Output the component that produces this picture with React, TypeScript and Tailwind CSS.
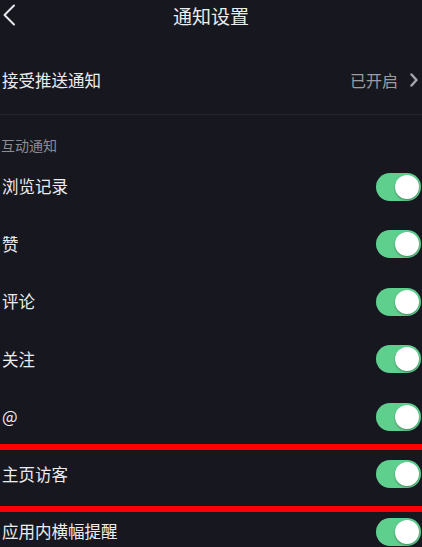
import { useState } from 'react'

type Item = {
    label: string
}

const items: Item[] = [
    { label: '浏览记录' },
    { label: '赞' },
    { label: '评论' },
    { label: '关注' },
    { label: '@' },
    { label: '主页访客' },
    { label: '应用内横幅提醒' },
]

function Toggle({ on, onClick }: { on: boolean; onClick: () => void }) {
    return (
        <button
            onClick={onClick}
            className={`relative h-[28px] w-[45px] rounded-full ${on ? 'bg-[#5fcf8e]' : 'bg-[#3a3a44]'}`}
        >
            <span
                className={`absolute top-[2px] h-[24px] w-[24px] rounded-full bg-white shadow-[0_1px_2px_rgba(0,0,0,0.35)] ${on ? 'left-[19px]' : 'left-[2px]'}`}
            />
        </button>
    )
}

export default function App() {
    const [states, setStates] = useState<boolean[]>(items.map(() => true))

    const flip = (i: number) => {
        setStates(prev => prev.map((v, j) => (j === i ? !v : v)))
    }

    return (
        <div className="h-[547px] w-[422px] overflow-hidden bg-[#171720] text-[#ececee] font-['Noto_Sans_CJK_SC',sans-serif]">
            {/* header */}
            <div className="relative flex h-[30px] items-center justify-center">
                <svg className="absolute left-[2px] top-[4px]" width="14" height="22" viewBox="0 0 14 22">
                    <polyline points="12,1.5 2.5,11 12,20.5" fill="none" stroke="#e8e8ea" strokeWidth="2" strokeLinecap="round" strokeLinejoin="round" />
                </svg>
                <span className="text-[19px] leading-none">通知设置</span>
            </div>

            {/* push */}
            <div className="mt-[16px] flex h-[68px] items-center justify-between pl-[2px] pr-[4px]">
                <span className="text-[16.5px]">接受推送通知</span>
                <div className="flex items-center gap-[12px]">
                    <span className="text-[16px] text-[#9c9ca2]">已开启</span>
                    <svg width="8" height="14" viewBox="0 0 8 14">
                        <polyline points="1.5,1.5 6.5,7 1.5,12.5" fill="none" stroke="#a4a4aa" strokeWidth="2.5" strokeLinecap="round" strokeLinejoin="round" />
                    </svg>
                </div>
            </div>
            <div className="h-px bg-[#24242e]" />

            {/* section */}
            <div className="h-[43px] pl-[1px] pt-[22px]">
                <span className="block text-[14px] leading-[16px] text-[#8c8c92]">互动通知</span>
            </div>

            <div className="relative">
                {items.map((item, i) => (
                    <div key={item.label} className="flex h-[57.5px] items-center justify-between pl-[2px] pr-[1px]">
                        <span className="text-[16.5px]">{item.label}</span>
                        <Toggle on={states[i]} onClick={() => flip(i)} />
                    </div>
                ))}
                {/* annotation marks */}
                <div className="absolute left-0 right-0 top-[286px] h-[6px] bg-[#ff0000]" />
                <div className="absolute left-0 right-0 top-[348px] h-[6px] bg-[#ff0000]" />
            </div>
        </div>
    )
}
